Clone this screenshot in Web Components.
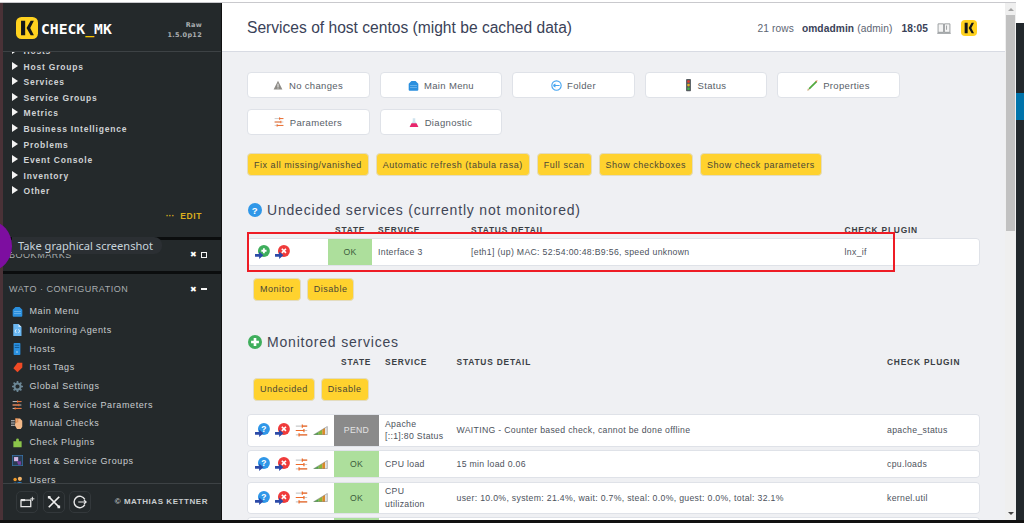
<!DOCTYPE html>
<html>
<head>
<meta charset="utf-8">
<title>Services of host centos</title>
<style>
html, body { margin: 0; height: 100%; overflow: hidden; background: #fff; }
body { font-family: "Liberation Sans", Arial, sans-serif; }
</style>
</head>
<body>
<cmk-app></cmk-app>
<script>
const ICONS = {
	logo: `<svg viewBox="0 0 24 24" width="100%" height="100%"><rect x="0" y="0" width="24" height="24" rx="6" fill="#ffd21f"/><path d="M5.5 4h4.5v16H5.5zM11.5 12l4.5-8h3.5l-4 8 4 8H16z" fill="#14171a"/></svg>`,
	warn: `<svg viewBox="0 0 16 16" width="10" height="10"><path d="M8 1l7 14H1z" fill="#8d8b86"/><path d="M7.2 6h1.6v5H7.2zM7.2 12h1.6v1.5H7.2z" fill="#eee"/></svg>`,
	home: `<svg viewBox="0 0 16 16" width="11" height="11"><path d="M1 5.5L5 1.5h6l4 4V14a1.5 1.5 0 0 1-1.5 1.5h-11A1.5 1.5 0 0 1 1 14z" fill="#2a8fde"/><path d="M3 8h10M3 11h10" stroke="#7fc0f0" stroke-width="1"/></svg>`,
	back: `<svg viewBox="0 0 16 16" width="11" height="11"><circle cx="8" cy="8" r="6.8" fill="#fff" stroke="#45a5f0" stroke-width="1.6"/><path d="M3.5 8h9M3.5 8l3-2.5M3.5 8l3 2.5" stroke="#45a5f0" stroke-width="1.5" fill="none"/></svg>`,
	light: `<svg viewBox="0 0 8 16" width="7" height="13"><rect x="1" y="0" width="6" height="15" rx="1" fill="#555c60"/><circle cx="4" cy="3" r="1.6" fill="#e63a2e"/><circle cx="4" cy="7.5" r="1.6" fill="#e8b21f"/><circle cx="4" cy="12" r="1.6" fill="#3fb54a"/></svg>`,
	pencil: `<svg viewBox="0 0 16 16" width="11" height="11"><path d="M14 2L3 13" stroke="#52a93f" stroke-width="2.6"/><path d="M15.5.5l-1.6 2.8-1.8-1.8z" fill="#d9734a"/><path d="M.5 15.5l.8-3.2 2.4 2.4z" fill="#c9a06e"/></svg>`,
	params: `<svg viewBox="0 0 16 16" width="10" height="10"><path d="M1 2.5h14M1 8h14M1 13.5h14" stroke="#c9c9c9" stroke-width="1.5"/><path d="M9 2.5h6M1 8h10M5 13.5h10" stroke="#ef6a28" stroke-width="1.5"/><path d="M9 .5v4M11 6v4M5 11.5v4" stroke="#ef6a28" stroke-width="1.5"/></svg>`,
	flask: `<svg viewBox="0 0 16 16" width="10" height="11"><path d="M6 1h4v5l5 9H1l5-9z" fill="#cfe4ee"/><path d="M4 9h8l3 6H1z" fill="#e8266c"/></svg>`,
	help: `<svg viewBox="0 0 16 16" width="14" height="14"><circle cx="8" cy="8" r="8" fill="#2f97e8"/><text x="8" y="12" font-size="11" font-weight="bold" font-family="Liberation Sans" text-anchor="middle" fill="#fff">?</text></svg>`,
	plus: `<svg viewBox="0 0 16 16" width="14" height="14"><circle cx="8" cy="8" r="8" fill="#3fae5c"/><path d="M8 3.5v9M3.5 8h9" stroke="#fff" stroke-width="3"/></svg>`,
	book: `<svg viewBox="0 0 16 13" width="14" height="11"><path d="M1 1h6.5v10H1zM8.5 1H15v10H8.5z" fill="#f4f4f4" stroke="#8f9396" stroke-width="1"/><path d="M0 12h16" stroke="#8f9396" stroke-width="1.4"/><path d="M11 3v5" stroke="#8f9396"/></svg>`,
	perf: `<svg viewBox="0 0 16 10" width="15" height="9"><path d="M0 10L16 0v10z" fill="#e4e4e4"/><path d="M0 10l6-3.7V10z" fill="#4aa93f"/><path d="M6 6.3l4-2.5V10H6z" fill="#86b53c"/><path d="M10 3.8l3-1.9V10h-3z" fill="#d98a2a"/><path d="M.5 9.6L15.5 .6v9H.5z" fill="none" stroke="#8a8a8a" stroke-width=".6"/></svg>`,
	tag: `<svg viewBox="0 0 16 16" width="11" height="11"><path d="M8 1h7v7l-7 7-6-6z" fill="#ef4a25"/></svg>`,
	gear: `<svg viewBox="0 0 16 16" width="11" height="11"><circle cx="8" cy="8" r="4.5" fill="none" stroke="#6c8796" stroke-width="3"/><path d="M8 0v3M8 13v3M0 8h3M13 8h3M2.3 2.3l2 2M11.7 11.7l2 2M13.7 2.3l-2 2M4.3 11.7l-2 2" stroke="#6c8796" stroke-width="2.4"/></svg>`,
	doc: `<svg viewBox="0 0 16 16" width="12" height="12"><path d="M3 0h7l4 4v12H3z" fill="#6ab7f2"/><path d="M10 0l4 4h-4z" fill="#cfe8fb"/><path d="M7 7L5.5 9.5 7 12M10 7l1.5 2.5L10 12" stroke="#fff" fill="none"/></svg>`,
	server: `<svg viewBox="0 0 16 16" width="12" height="12"><rect x="3.5" y="0" width="9" height="16" rx="1" fill="#2a8fde"/><path d="M5 3h6M5 6h6" stroke="#0e4c80"/><circle cx="8" cy="12" r="1" fill="#bfe2fb"/></svg>`,
	hand: `<svg viewBox="0 0 16 16" width="12" height="12"><path d="M0 5h5M0 8h5M0 11h5" stroke="#ddd" stroke-width="1.2"/><path d="M6 7V2h6l3 3v8l-2 3H8l-3-5z" fill="#f2b888"/><path d="M6 7V2h2v5zM9 7V2" stroke="#d47c40" fill="none" stroke-width=".8"/></svg>`,
	puzzle: `<svg viewBox="0 0 16 16" width="11" height="11"><path d="M2 6h4V4a2 2 0 1 1 4 0v2h4v9H2z" fill="#8bc44a"/></svg>`,
	groups: `<svg viewBox="0 0 16 16" width="11" height="11"><rect x=".5" y=".5" width="15" height="15" fill="#2a3c52" stroke="#3a78b0"/><rect x="3" y="3" width="6" height="6" fill="#d8b8e6"/><path d="M7 9h6v5H9z" fill="#7a3fa0"/></svg>`,
	users: `<svg viewBox="0 0 16 16" width="11" height="11"><circle cx="4.5" cy="8" r="2.5" fill="#ef9a28"/><circle cx="11.5" cy="7" r="3" fill="#f2b46a"/><path d="M0 16c0-5 9-5 9 0zM6 16c0-6 10-6 10 0z" fill="#2f86cf"/></svg>`,
	addsnap: `<svg viewBox="0 0 18 16" width="15" height="13"><path d="M1 5h12v8H1z" fill="none" stroke="#e8e8e8" stroke-width="1.6"/><path d="M15 1v5M12.5 3.5h5" stroke="#e8e8e8" stroke-width="1.2"/><path d="M1 5h5" stroke="#e8e8e8" stroke-width="2.6"/></svg>`,
	tools: `<svg viewBox="0 0 16 16" width="14" height="14"><path d="M2 2l12 12M14 2L2 14" stroke="#f0f0f0" stroke-width="2"/><path d="M1 1h3v3H1zM12 12h3v3h-3z" fill="#f0f0f0"/></svg>`,
	logout: `<svg viewBox="0 0 16 16" width="14" height="14"><path d="M13.5 5A6.5 6.5 0 1 0 13.5 11" fill="none" stroke="#e8e8e8" stroke-width="1.6"/><path d="M6 8h9M12.5 5.5L15 8l-2.5 2.5" fill="none" stroke="#e8e8e8" stroke-width="1.4"/></svg>`,
};
function actionIcon(color, mark) {
	return `<svg viewBox="0 0 16 15" width="15" height="14"><circle cx="9.5" cy="6.4" r="6.4" fill="${color}"/>${mark}<path d="M0 9.6h4.4V7l4.6 4-4.6 4v-2.4H0z" fill="#2b4aa8"/></svg>`;
}
const MARKS = {
	green: `<path d="M6.8 6.2h5.5M9.5 3.4v5.5" stroke="#fff" stroke-width="2"/>`,
	red: `<path d="M7.3 4l4.4 4.4M11.7 4l-4.4 4.4" stroke="#fff" stroke-width="1.8"/>`,
	blue: `<text x="9.7" y="9.4" font-size="9" font-weight="bold" font-family="Liberation Sans" text-anchor="middle" fill="#fff">?</text>`,
};

function define(tag, css, html, props) {
	const tpl = document.createElement("template");
	tpl.innerHTML = `<style>${css}</style>${html}`;
	customElements.define(tag, class extends HTMLElement {
		constructor() {
			super();
			this.attachShadow({ mode: "open" });
			this.shadowRoot.appendChild(tpl.content.cloneNode(true));
			if(props) props(this, this.shadowRoot);
		}
	});
}

define("cmk-logo", `:host { display: inline-flex; align-items: center; align-self: flex-start; gap: 3px; }
.mark { width: 22px; height: 22px; }
.name { font: bold 14.7px "DejaVu Sans Mono", monospace; color: #fff; }
u { text-decoration: none; color: #f5c400; }`,
`<span class="mark">${ICONS.logo}</span><span class="name">CHECK<u>_</u>MK</span>`);

define("nav-item", `:host { display: flex; align-items: center; height: 15.55px; font: bold 8.5px "Liberation Sans", sans-serif; letter-spacing: .8px; color: #cfd2d4; }
i { width: 0; height: 0; margin: 0 5.5px 0 9px; border-left: 6px solid #f4f4f4; border-top: 4px solid transparent; border-bottom: 4px solid transparent; position: relative; top: -1px; }`,
`<i></i><slot></slot>`);

define("wato-item", `:host { display: flex; align-items: center; height: 18.7px; font: 9px "Liberation Sans", sans-serif; letter-spacing: .6px; color: #c9cdcf; }
.ic { width: 12px; height: 13px; margin: 0 6.5px 0 4px; display: flex; align-items: center; justify-content: center; }`,
`<span class="ic"></span><slot></slot>`, (el, root) => {
	root.querySelector(".ic").innerHTML = ICONS[el.getAttribute("icon")];
});

define("snapin-head", `:host { display: flex; align-items: center; justify-content: space-between; font: 9px "Liberation Sans", sans-serif; letter-spacing: .53px; color: #a9adb0; }
.btns { display: flex; align-items: center; gap: 5px; color: #fff; }
b { font: bold 8px "DejaVu Sans", sans-serif; width: 6px; text-align: center; }
s { display: block; background: #f4f4f4; }`,
`<slot></slot><span class="btns"><b>✖</b><s></s></span>`, (el, root) => {
	let s = root.querySelector("s");
	if(el.hasAttribute("open")) {
		s.style.cssText = "width:6px;height:2px";
	} else {
		s.style.cssText = "width:4px;height:4px;background:transparent;border:1.5px solid #f4f4f4";
	}
});

define("foot-btn", `:host { display: flex; align-items: center; justify-content: center; box-sizing: border-box; width: 22px; height: 22px; border: 1px solid #33383b; border-radius: 5px; }`, `<slot></slot>`);

define("cmk-sidebar", `:host { display: flex; flex-direction: column; width: 218px; flex: none; background: #24292b; height: 100%; position: relative; }
.head { flex: none; height: 49px; box-sizing: border-box; padding: 14px 19px 0 13px; display: flex; justify-content: space-between; border-bottom: 1px solid #3d4245; }
.ver { font: bold 6.5px "DejaVu Sans", sans-serif; letter-spacing: .3px; color: #a9adb0; text-align: right; line-height: 10px; padding-top: 3px; }
.views { flex: none; height: 185px; overflow: hidden; position: relative; }
.list { margin-top: -8.5px; }
.edit { position: absolute; right: 19px; top: 159px; font: bold 8.5px "Liberation Sans", sans-serif; letter-spacing: .6px; color: #d9ae1e; }
.edit span { margin-right: 6px; letter-spacing: 0; }
.bar { flex: none; height: 3px; background: #0b0d0e; }
.bookmarks { flex: none; height: 31px; box-sizing: border-box; padding: 9.5px 14px 0 6px; }
.wato { flex: 1; min-height: 0; overflow: hidden; padding: 10px 14px 0 6px; }
.wato snapin-head { margin-bottom: 8px; }
.wato .rows { margin-left: -2px; }
.foot { flex: none; height: 37px; box-sizing: border-box; border-top: 1px solid #3d4245; padding: 7px 13px 0 13px; display: flex; align-items: flex-start; gap: 4.5px; }
.copy { margin-left: auto; font: bold 8px "Liberation Sans", sans-serif; letter-spacing: .55px; color: #c9cdcf; padding-top: 6px; }`,
`<div class="head"><cmk-logo></cmk-logo><div class="ver">Raw<br>1.5.0p12</div></div>
<div class="views"><div class="list">
<nav-item>Hosts</nav-item><nav-item>Host Groups</nav-item><nav-item>Services</nav-item><nav-item>Service Groups</nav-item><nav-item>Metrics</nav-item><nav-item>Business Intelligence</nav-item><nav-item>Problems</nav-item><nav-item>Event Console</nav-item><nav-item>Inventory</nav-item><nav-item>Other</nav-item>
</div><div class="edit"><span>···</span>EDIT</div></div>
<div class="bar"></div>
<div class="bookmarks"><snapin-head>BOOKMARKS</snapin-head></div>
<div class="bar"></div>
<div class="wato"><snapin-head open>WATO · CONFIGURATION</snapin-head><div class="rows">
<wato-item icon="home">Main Menu</wato-item><wato-item icon="doc">Monitoring Agents</wato-item><wato-item icon="server">Hosts</wato-item><wato-item icon="tag">Host Tags</wato-item><wato-item icon="gear">Global Settings</wato-item><wato-item icon="params">Host &amp; Service Parameters</wato-item><wato-item icon="hand">Manual Checks</wato-item><wato-item icon="puzzle">Check Plugins</wato-item><wato-item icon="groups">Host &amp; Service Groups</wato-item><wato-item icon="users">Users</wato-item>
</div></div>
<div class="foot"><foot-btn>${ICONS.addsnap}</foot-btn><foot-btn>${ICONS.tools}</foot-btn><foot-btn>${ICONS.logout}</foot-btn><span class="copy">© MATHIAS KETTNER</span></div>`);

define("ctx-button", `:host { display: flex; align-items: center; justify-content: center; gap: 5.5px; box-sizing: border-box; width: 122.5px; height: 26px; background: #fff; border: 1px solid #dfe2e8; border-radius: 4px; font: 9.5px "Liberation Sans", sans-serif; letter-spacing: .33px; color: #585e68; }`,
`<span id="i" style="display:flex"></span><slot></slot>`, (el, root) => {
	root.getElementById("i").innerHTML = ICONS[el.getAttribute("icon")];
});

define("cmk-button", `:host { display: inline-flex; align-items: center; box-sizing: border-box; height: 23px; padding: 0 6px; background: #ffd22e; border: 1px solid #e3dcc0; border-radius: 4px; font: 9px "Liberation Sans", sans-serif; letter-spacing: .53px; color: #4a4636; white-space: nowrap; }`, `<slot></slot>`);

define("section-title", `:host { display: flex; align-items: center; gap: 5px; padding-left: 1px; height: 16px; font: 14px "Liberation Sans", sans-serif; letter-spacing: .8px; color: #3f4656; }
span { display: flex; }`,
`<span id="i"></span><slot></slot>`, (el, root) => {
	root.getElementById("i").innerHTML = ICONS[el.getAttribute("icon")];
});

// grid columns are passed in from the table through a custom property
define("svc-head", `:host { display: grid; grid-template-columns: var(--cols); height: 15.5px; align-items: center; font: bold 8.4px "Liberation Sans", sans-serif; letter-spacing: .8px; color: #3b3f44; }
span:nth-of-type(2) { padding-left: 7px; }`,
`<span></span><span>STATE</span><span>SERVICE</span><span>STATUS DETAIL</span><span>CHECK PLUGIN</span>`);

define("svc-row", `:host { display: grid; grid-template-columns: var(--cols); box-sizing: border-box; background: #fff; box-shadow: inset 0 0 0 1px #dfe2e8; border-radius: 4px; font: 8.7px "Liberation Sans", sans-serif; letter-spacing: .32px; color: #4c525c; margin-bottom: 3.3px; overflow: hidden; }
div { display: flex; align-items: center; line-height: 12.5px; white-space: pre-line; }
.acts { padding-left: 8px; gap: 5px; }
.st { justify-content: center; font-size: 8.7px; color: #3d5e3c; background: #addf9c; margin: 1px 6px 1px 0; }
.st.pend { background: #8a8a8a; color: #e3e3e3; }`,
`<div class="acts"></div><div class="st"></div><div class="sv"></div><div class="dt"></div><div class="pl"></div>`, (el, root) => {
	let icons = el.getAttribute("kind") === "new"
		? actionIcon("#3fae5c", MARKS.green) + actionIcon("#ef3b3b", MARKS.red)
		: actionIcon("#2f97e8", MARKS.blue) + actionIcon("#ef3b3b", MARKS.red) + ICONS.params.replace('width="10" height="10"', 'width="13" height="13"') + ICONS.perf;
	root.querySelector(".acts").innerHTML = icons;
	let st = root.querySelector(".st");
	st.textContent = el.getAttribute("state");
	if(st.textContent === "PEND") st.classList.add("pend");
	root.querySelector(".sv").textContent = el.getAttribute("svc");
	root.querySelector(".dt").textContent = el.getAttribute("detail");
	root.querySelector(".pl").textContent = el.getAttribute("plugin");
	el.style.height = el.getAttribute("h") + "px";
});

define("cmk-main", `:host { display: flex; flex-direction: column; flex: 1; min-width: 0; height: 100%; background: #eff0f3; overflow: hidden; position: relative; }
.top { flex: none; height: 49px; box-sizing: border-box; background: #fff; border-bottom: 1px solid #d8dbe3; padding: 0 28px 0 25px; display: flex; align-items: center; justify-content: space-between; }
h1 { margin: 0; font: 400 15.6px "Liberation Sans", sans-serif; color: #3a4258; padding-top: 2px; }
.info { display: flex; align-items: center; font: 10.2px "Liberation Sans", sans-serif; color: #5d6472; letter-spacing: .1px; padding-top: 2px; }
.info b { color: #3a4258; }
.info svg { display: block; }
.logo { width: 16px; height: 16px; margin-left: 10px; }
.body { padding: 20px 25px 0; }
.row { display: flex; gap: 10px; margin-bottom: 11px; }
.row.y { gap: 7px; margin-top: 18px; margin-bottom: 0; }
.sec { margin-top: 25.5px; }
.tbl { --cols: 81px 50px 93px 373.6px 1fr; margin-top: 5px; }
.tbl.m { --cols: 87px 51px 71.5px 430.5px 1fr; margin-top: 4px; }
.acts { display: flex; gap: 6px; padding: 8.7px 0 0 6px; }
.acts.m { padding: 8.5px 0 13px 6px; }
.mon { margin-top: 33px; }
.mark { position: absolute; left: 25px; top: 229px; width: 647.5px; height: 40px; box-sizing: border-box; border: 2px solid #ee1c25; pointer-events: none; }`,
`<div class="top"><h1>Services of host centos (might be cached data)</h1>
<div class="info"><span>21 rows</span><b style="margin-left:8px">omdadmin</b><span style="margin-left:3px">(admin)</span><b style="margin-left:9px">18:05</b><span style="margin-left:9px">${ICONS.book}</span><span class="logo">${ICONS.logo}</span></div></div>
<div class="body">
<div class="row"><ctx-button icon="warn">No changes</ctx-button><ctx-button icon="home">Main Menu</ctx-button><ctx-button icon="back">Folder</ctx-button><ctx-button icon="light">Status</ctx-button><ctx-button icon="pencil">Properties</ctx-button></div>
<div class="row"><ctx-button icon="params">Parameters</ctx-button><ctx-button icon="flask">Diagnostic</ctx-button></div>
<div class="row y"><cmk-button>Fix all missing/vanished</cmk-button><cmk-button>Automatic refresh (tabula rasa)</cmk-button><cmk-button>Full scan</cmk-button><cmk-button>Show checkboxes</cmk-button><cmk-button>Show check parameters</cmk-button></div>
<div class="sec"><section-title icon="help">Undecided services (currently not monitored)</section-title>
<div class="tbl"><svc-head></svc-head><svc-row kind="new" h="28" state="OK" svc="Interface 3" detail="[eth1] (up) MAC: 52:54:00:48:B9:56, speed unknown" plugin="lnx_if"></svc-row></div>
<div class="acts"><cmk-button>Monitor</cmk-button><cmk-button>Disable</cmk-button></div></div>
<div class="mon"><section-title icon="plus">Monitored services</section-title>
<div class="tbl m"><svc-head></svc-head>
<div class="acts m"><cmk-button>Undecided</cmk-button><cmk-button>Disable</cmk-button></div>
<svc-row h="33" state="PEND" svc="Apache&#10;[::1]:80 Status" detail="WAITING - Counter based check, cannot be done offline" plugin="apache_status"></svc-row>
<svc-row h="28" state="OK" svc="CPU load" detail="15 min load 0.06" plugin="cpu.loads"></svc-row>
<svc-row h="32.5" state="OK" svc="CPU&#10;utilization" detail="user: 10.0%, system: 21.4%, wait: 0.7%, steal: 0.0%, guest: 0.0%, total: 32.1%" plugin="kernel.util"></svc-row>
<svc-row h="33" state="" svc="" detail="" plugin=""></svc-row>
</div></div>
</div><div class="mark"></div>`);

define("cmk-scrollbar", `:host { display: flex; flex-direction: column; flex: none; width: 11px; background: #efefef; height: 100%; }
.up { height: 12px; display: flex; align-items: center; justify-content: center; }
.up i { width: 0; height: 0; border-bottom: 3px solid #a3a3a3; border-left: 3px solid transparent; border-right: 3px solid transparent; }
.thumb { height: 216px; background: #c1c1c1; margin: 0 1px; }
.down { margin-top: auto; height: 13px; display: flex; align-items: center; justify-content: center; }
.down i { width: 0; height: 0; border-top: 3px solid #444; border-left: 3px solid transparent; border-right: 3px solid transparent; }`,
`<div class="up"><i></i></div><div class="thumb"></div><div class="down"><i></i></div>`);

define("cmk-app", `:host { display: block; height: 100%; position: relative; background: #fff; }
.frame { position: absolute; inset: 3px 0 3px 0; display: flex; }
.line { position: absolute; left: 0; right: 8px; top: 2px; height: 1px; background: #c9c9cd; }
.base { position: absolute; left: 0; right: 0; bottom: 0; height: 3px; background: #111; }
.edge { flex: none; width: 3px; background: #4a3237; }
.gap { flex: none; width: 1px; background: #111; }
.far { flex: none; width: 8px; height: 100%; background: #22282c; display: flex; flex-direction: column; position: relative; }
.far .w { height: 20px; background: #fff; }
.far .s { height: 70px; }
.far .b { height: 27px; background: #0073aa; }
.tip { position: absolute; left: 12px; top: 237px; width: 150px; box-sizing: border-box; height: 17px; display: flex; align-items: center; padding-left: 6px; background: #2b2f33; border-radius: 0 8px 8px 0; font: 11.1px "Noto Sans", sans-serif; color: #c8d4dc; white-space: nowrap; }
.blob { position: absolute; left: -32px; top: 221px; width: 44px; height: 50px; border-radius: 50%; background: #7d0ea0; }`,
`<div class="line"></div>
<div class="frame"><div class="edge"></div><cmk-sidebar></cmk-sidebar><div class="gap"></div><cmk-main></cmk-main><cmk-scrollbar></cmk-scrollbar><div class="far"><div class="w"></div><div class="s"></div><div class="b"></div></div></div>
<div class="base"></div><div class="blob"></div><div class="tip">Take graphical screenshot</div>`);
</script>
</body>
</html>
